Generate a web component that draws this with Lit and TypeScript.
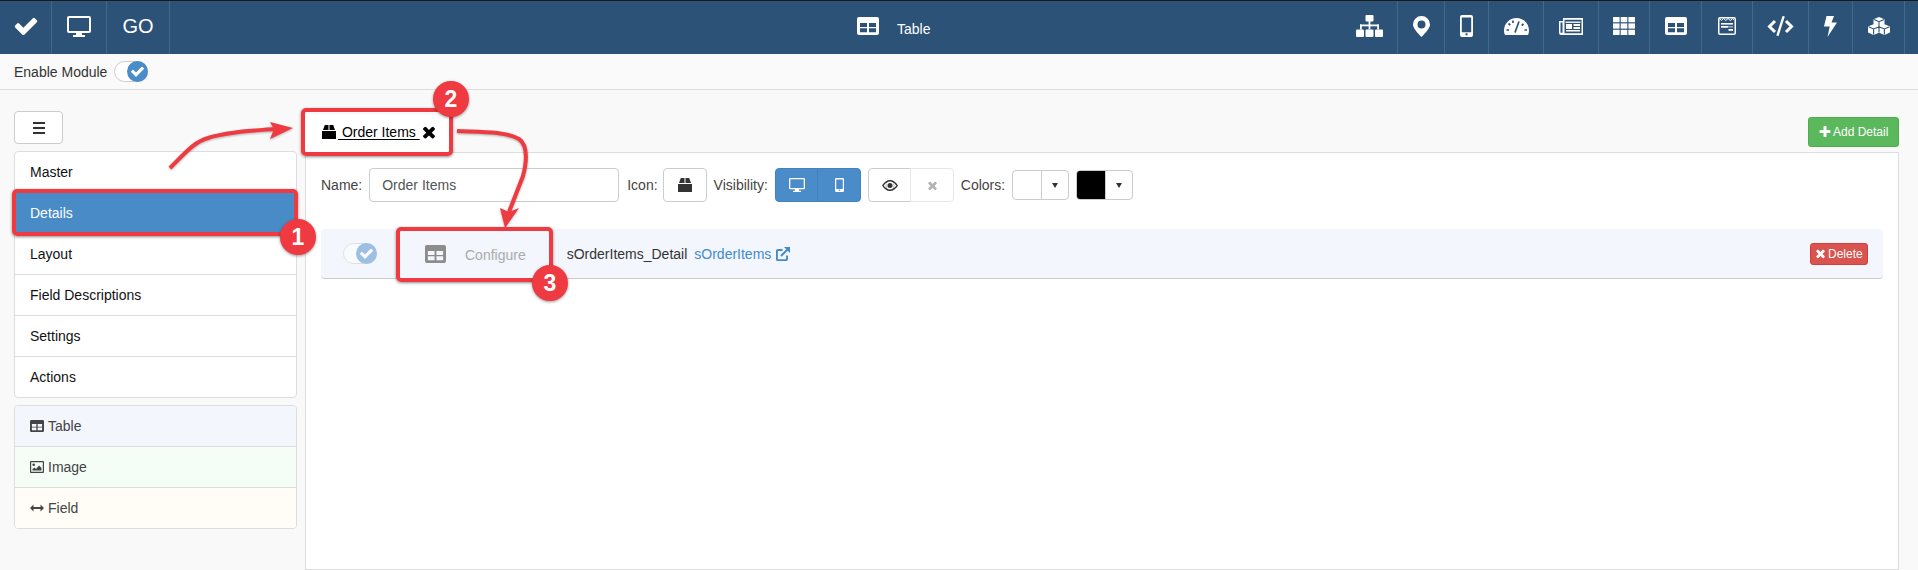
import { LitElement, html, css, svg } from "lit";
import { customElement } from "lit/decorators.js";

type Ic = { w: number; h: number; b: any };
const fa = (d: string) => svg`<path d=${d} />`;
const CHECK = "M1671 566q0 40-28 68l-724 724-136 136q-28 28-68 28t-68-28l-136-136-362-362q-28-28-28-68t28-68l136-136q28-28 68-28t68 28l294 295 656-657q28-28 68-28t68 28l136 136q28 28 28 68z";
const TIMES = "M1490 1322q0 40-28 68l-136 136q-28 28-68 28t-68-28l-294-294-294 294q-28 28-68 28t-68-28l-136-136q-28-28-28-68t28-68l294-294-294-294q-28-28-28-68t28-68l136-136q28-28 68-28t68 28l294 294 294-294q28-28 68-28t68 28l136 136q28 28 28 68t-28 68l-294 294 294 294q28 28 28 68z";
const PLUS = "M1600 736v192q0 40-28 68t-68 28h-416v416q0 40-28 68t-68 28h-192q-40 0-68-28t-28-68v-416h-416q-40 0-68-28t-28-68v-192q0-40 28-68t68-28h416v-416q0-40 28-68t68-28h192q40 0 68 28t28 68v416h416q40 0 68 28t28 68z";
const BAR = "#2c5278";

const icons: Record<string, Ic> = {
  check: { w: 1792, h: 1792, b: fa(CHECK) },
  times: { w: 1792, h: 1792, b: fa(TIMES) },
  plus: { w: 1792, h: 1792, b: fa(PLUS) },
  table: { w: 22, h: 18, b: svg`<path fill-rule="evenodd" d="M2 0h18a2 2 0 012 2v14a2 2 0 01-2 2H2a2 2 0 01-2-2V2a2 2 0 012-2zM3 6v4h7V6zM12 6v4h7V6zM3 11.3v4h7v-4zM12 11.3v4h7v-4z"/>` },
  desktop: { w: 24, h: 21, b: svg`<path fill-rule="evenodd" d="M2 0h20a2 2 0 012 2v13a2 2 0 01-2 2h-7v2h3v2H6v-2h3v-2H2a2 2 0 01-2-2V2a2 2 0 012-2zM2 2v13h20V2z"/>` },
  mobile: { w: 13, h: 22, b: svg`<path fill-rule="evenodd" d="M2 0h9a2 2 0 012 2v18a2 2 0 01-2 2H2a2 2 0 01-2-2V2a2 2 0 012-2zM1.8 2.5v14.7h9.4V2.5zM5.5 18.2v2h2v-2z"/>` },
  sitemap: { w: 27, h: 22, b: svg`<rect x="9.5" y="0" width="8" height="6.5" rx="1"/><rect x="12.6" y="6" width="1.8" height="4"/><rect x="4" y="9.5" width="19" height="1.8"/><rect x="4" y="9.5" width="1.8" height="5"/><rect x="21.2" y="9.5" width="1.8" height="5"/><rect x="12.6" y="9.5" width="1.8" height="5"/><rect x="0" y="14.5" width="8" height="7.5" rx="1"/><rect x="9.5" y="14.5" width="8" height="7.5" rx="1"/><rect x="19" y="14.5" width="8" height="7.5" rx="1"/>` },
  pin: { w: 17, h: 21, b: svg`<path fill-rule="evenodd" d="M8.5 0A8.5 8.5 0 0117 8.5c0 3.5-4.5 8.5-8.5 12.5C4.5 17 0 12 0 8.5A8.5 8.5 0 018.5 0zM8.5 4.5a4 4 0 100 8 4 4 0 000-8z"/>` },
  gauge: { w: 25, h: 17, b: svg`<path d="M12.5 0C19.5 0 25 5.5 25 12.5c0 1.7-.3 3.2-1 4.5H1c-.7-1.3-1-2.8-1-4.5C0 5.5 5.5 0 12.5 0z"/><g stroke=${BAR} stroke-width="1.7" fill="none"><path d="M11 14.5L15 3.5"/><path d="M9 2.5v2.5M4.5 5.5l1.8 1.6M2.5 12h2.5M20.5 12h2.5M19.5 6l-1.8 1.5"/></g>` },
  news: { w: 24, h: 17, b: svg`<path fill-rule="evenodd" d="M4 0h20v17H2.2A2.2 2.2 0 010 14.8V3h4zM1.5 4.5v10.3h2V4.5zM5.5 1.8v13.4h17V1.8z"/><rect x="6.5" y="3.5" width="15" height="1.5" opacity=".9"/><rect x="7" y="6" width="6" height="5"/><rect x="14.5" y="6" width="6.5" height="2"/><rect x="14.5" y="9" width="6.5" height="2"/><rect x="7" y="12" width="14" height="1.5"/>` },
  th: { w: 22, h: 18, b: svg`<rect width="6.6" height="5.2" rx=".5"/><rect x="7.7" width="6.6" height="5.2"/><rect x="15.4" width="6.6" height="5.2" rx=".5"/><rect y="6.4" width="6.6" height="5.2"/><rect x="7.7" y="6.4" width="6.6" height="5.2"/><rect x="15.4" y="6.4" width="6.6" height="5.2"/><rect y="12.8" width="6.6" height="5.2" rx=".5"/><rect x="7.7" y="12.8" width="6.6" height="5.2"/><rect x="15.4" y="12.8" width="6.6" height="5.2" rx=".5"/>` },
  calendar: { w: 18, h: 18, b: svg`<path fill-rule="evenodd" d="M2 0h14a2 2 0 012 2v14a2 2 0 01-2 2H2a2 2 0 01-2-2V2a2 2 0 012-2zM1.5 1.5v15h15v-15z"/><path d="M1.5 1.5l2 2 2-2 2.3 2 2.3-2 2.2 2 2.2-2 1.5 1.5" fill="none" stroke="currentColor" stroke-width="1"/><rect x="3" y="6" width="12" height="1.6"/><rect x="3" y="9" width="7" height="1.6"/><rect x="3" y="9" width="12" height="1.6" opacity=".5"/><rect x="10.5" y="12" width="4.5" height="1.8"/>` },
  code: { w: 27, h: 20, b: svg`<g fill="none" stroke="currentColor" stroke-width="3"><path d="M8 5L2.5 10.5 8 16"/><path d="M19 5l5.5 5.5L19 16"/></g><path d="M15.5 0L17.8 .6 11.6 20l-2.3-.6z"/>` },
  bolt: { w: 13, h: 21, b: svg`<path d="M2.5 0h7.5L7.5 6.5H13L3.5 21l2.2-10.5H0z"/>` },
  cubes: { w: 22, h: 18, b: svg`<path d="M11 0l5.5 2.2v5L22 9.5v6L16.5 18 11 15.8 5.5 18 0 15.5v-6l5.5-2.3v-5z"/><g fill="none" stroke=${BAR} stroke-width="1.1"><path d="M6 2.6l5 2.1 5-2.1M11 4.7v5"/><path d="M.6 9.8l5 2.1 5.4-2.1 5.4 2.1 5-2.1M5.6 11.9V17.5M16.4 11.9V17.5M11 9.7V15.6"/></g>` },
  box: { w: 14, h: 14, b: svg`<path d="M1 5L2.8 0h3.7v5zM13 5L11.2 0H7.5v5zM0 6h14v8H0z"/>` },
  eye: { w: 16, h: 11, b: svg`<path fill-rule="evenodd" d="M0 5.5C2 2 5 0 8 0s6 2 8 5.5C14 9 11 11 8 11S2 9 0 5.5zM8 1.6a3.9 3.9 0 100 7.8 3.9 3.9 0 000-7.8zM1.6 5.5C3 7.3 4 8 5 8.6a4.9 4.9 0 010-6.2C4 3 3 3.7 1.6 5.5zM14.4 5.5C13 3.7 12 3 11 2.4a4.9 4.9 0 010 6.2c1-.6 2-1.3 3.4-3.1z"/><circle cx="8" cy="5.5" r="2.5"/>` },
  image: { w: 14, h: 12, b: svg`<path fill-rule="evenodd" d="M1 0h12a1 1 0 011 1v10a1 1 0 01-1 1H1a1 1 0 01-1-1V1a1 1 0 011-1zM1.2 1.2v9.6h11.6V1.2z"/><circle cx="3.7" cy="3.7" r="1.3"/><path d="M2.5 9.5V8l2-1.5L6 8l3-3.5 2.5 2.5v2.5z"/>` },
  arrows: { w: 14, h: 8, b: svg`<path d="M0 4l3.5-3.5V3h7V.5L14 4l-3.5 3.5V5h-7v2.5z"/>` },
  external: { w: 14, h: 14, b: svg`<g fill="none" stroke="currentColor" stroke-width="1.9"><path d="M11 8.5V12a1.2 1.2 0 01-1.2 1.2H2A1.2 1.2 0 01.9 12V4.2A1.2 1.2 0 012 3h4.5"/><path d="M5 9L12.5 1.5"/></g><path d="M8 0h6v6z"/>` },
};

const ic = (name: string, w: number, h: number) => {
  const i = icons[name];
  return html`<svg class="ic" width=${w} height=${h} viewBox="0 0 ${i.w} ${i.h}" fill="currentColor" preserveAspectRatio="none">${i.b}</svg>`;
};

const rightIcons: [string, number, number, number][] = [
  ["sitemap", 27, 22, 56], ["pin", 17, 21, 47], ["mobile", 13, 22, 44], ["gauge", 25, 17, 55], ["news", 24, 17, 55],
  ["th", 22, 18, 51], ["table", 22, 18, 52], ["calendar", 18, 18, 51], ["code", 27, 20, 56], ["bolt", 13, 21, 44], ["cubes", 22, 18, 52],
];

@customElement("app-root")
export class AppRoot extends LitElement {
  static styles = css`
    :host { display: block; position: relative; width: 1918px; height: 570px; overflow: hidden; background: #f9f9f9; font-family: "Liberation Sans", Arial, sans-serif; font-size: 14px; color: #333; }
    .ic { display: block; flex: none; }
    .topbar { display: flex; height: 53px; border-top: 1px solid #1a1a1a; background: #2c5278; color: #fff; }
    .cell { display: flex; align-items: center; justify-content: center; box-sizing: border-box; padding-bottom: 3px; border-right: 1px solid #44678b; }
    .c1 { width: 52px; } .c2 { width: 55px; } .c3 { width: 63px; font-size: 20px; }
    .title { flex: 1; display: flex; align-items: center; gap: 18px; padding: 0 0 3px 687px; font-size: 14px; }
    .title span { margin-top: 6px; }
    .rcells { display: flex; margin-right: 13px; }
    .subbar { display: flex; align-items: center; gap: 7px; height: 35px; padding-left: 14px; background: #fafafa; border-bottom: 1px solid #ddd; }
    .toggle { position: relative; width: 34px; height: 21px; box-sizing: border-box; border: 1px solid #ccc; border-radius: 11px; background: #fff; }
    .knob { position: absolute; right: -1px; top: -1px; width: 21px; height: 21px; border-radius: 50%; background: #4a8cc9; color: #fff; display: flex; align-items: center; justify-content: center; }
    .toggle.dim { opacity: .5; }
    .layout { display: flex; height: 480px; }
    aside { width: 305px; box-sizing: border-box; padding: 21px 8px 0 14px; flex: none; }
    .burger { width: 49px; height: 33px; box-sizing: border-box; background: #fff; border: 1px solid #ccc; border-radius: 4px; display: flex; flex-direction: column; justify-content: center; align-items: center; gap: 3px; }
    .burger i { display: block; width: 12px; height: 2px; background: #333; }
    .list { margin-top: 7px; border: 1px solid #ddd; border-radius: 4px; background: #fff; overflow: hidden; }
    .item { display: flex; align-items: center; gap: 4px; height: 40px; padding-left: 15px; color: #111; border-bottom: 1px solid #ddd; }
    .item:last-child { border-bottom: 0; }
    .item.active { background: #488bc7; color: #fff; }
    .tool { color: #444; }
    .t-table { background: #f3f6fd; } .t-image { background: #f5fdf7; } .t-field { background: #fffdf5; }
    main { width: 1594px; flex: none; display: flex; flex-direction: column; }
    .head { height: 62px; display: flex; justify-content: space-between; align-items: flex-end; }
    .tab { display: flex; align-items: center; height: 38px; margin-bottom: -1px; padding: 0 14px 4px 17px; box-sizing: border-box; background: #fff; color: #000; z-index: 1; }
    .tab span { margin-left: 2px; text-decoration: underline; white-space: pre; text-underline-offset: 2px; }
    .add { display: flex; align-items: center; gap: 1px; height: 30px; box-sizing: border-box; width: 91px; padding-left: 9px; margin-bottom: 5px; background: #5cb85c; border: 1px solid #4cae4c; border-radius: 3px; color: #fff; font-size: 12px; }
    .panel { flex: 1; background: #fff; border: 1px solid #ddd; padding: 15px; }
    .form { display: flex; align-items: center; gap: 7px; height: 34px; color: #444; }
    .input { width: 250px; height: 34px; box-sizing: border-box; margin-right: 1px; border: 1px solid #ccc; border-radius: 4px; padding-left: 12px; display: flex; align-items: center; color: #555; }
    .icon-label { margin-right: -2px; }
    .btn { display: flex; align-items: center; justify-content: center; width: 44px; height: 34px; box-sizing: border-box; background: #fff; border: 1px solid #ccc; border-radius: 4px; color: #333; }
    .group { display: flex; }
    .group .btn { width: 43.5px; }
    .group .btn:first-child { border-radius: 4px 0 0 4px; }
    .group .btn:last-child { border-radius: 0 4px 4px 0; margin-left: -1px; }
    .btn.on { background: #4a8cc9; border-color: #4382bd; color: #fff; }
    .btn.off { border-color: #e6e6e6; color: #b4b4b4; }
    .color { display: flex; height: 30px; width: 57px; box-sizing: border-box; border: 1px solid #ccc; border-radius: 4px; overflow: hidden; background: #fff; }
    .swatch { width: 28px; border-right: 1px solid #ccc; flex: none; }
    .swatch.black { background: #000; }
    .caret { flex: 1; display: flex; align-items: center; justify-content: center; }
    .caret i { display: block; width: 0; height: 0; border-left: 3.5px solid transparent; border-right: 3.5px solid transparent; border-top: 5px solid #333; }
    .row { display: flex; align-items: center; height: 50px; box-sizing: border-box; margin-top: 27px; padding: 0 15px 0 22px; background: #f3f6fd; border-bottom: 1px solid #ccc; border-radius: 4px; color: #333; }
    .cfg { display: flex; align-items: center; gap: 19px; margin-left: 48px; color: #aaa; }
    .cfg .ic { color: #8c8c8c; }
    .cfg span { margin-top: 2px; }
    .name { margin-left: 41px; }
    .link { display: flex; align-items: center; gap: 5px; margin-left: 7px; color: #428bca; }
    .del { display: flex; align-items: center; gap: 1px; margin-left: auto; width: 58px; height: 22px; box-sizing: border-box; padding-left: 3px; background: #d9534f; border: 1px solid #d43f3a; border-radius: 3px; color: #fff; font-size: 12px; }
    .frame { position: absolute; box-sizing: border-box; border: 4px solid #ee3a40; border-radius: 5px; box-shadow: 0 1px 3px rgba(0,0,0,.45); z-index: 2; }
    .f1 { left: 12px; top: 189px; width: 286px; height: 47px; }
    .f2 { left: 301px; top: 108px; width: 152px; height: 48px; }
    .f3 { left: 396px; top: 227px; width: 157px; height: 55px; }
    .badge { position: absolute; width: 36px; height: 36px; border-radius: 50%; background: #ee3a40; color: #fff; font-size: 23px; font-weight: bold; display: flex; align-items: center; justify-content: center; box-shadow: 0 1px 3px rgba(0,0,0,.4); z-index: 3; }
    .b1 { left: 280px; top: 219px; } .b2 { left: 433px; top: 81px; } .b3 { left: 532px; top: 265px; }
    .arrows { position: absolute; left: 0; top: 0; z-index: 2; pointer-events: none; filter: drop-shadow(0 1px 1px rgba(0,0,0,.3)); }
  `;

  render() {
    return html`
      <div class="topbar">
        <div class="cell c1">${ic("check", 26, 26)}</div>
        <div class="cell c2">${ic("desktop", 24, 21)}</div>
        <div class="cell c3">GO</div>
        <div class="title">${ic("table", 22, 18)}<span>Table</span></div>
        <div class="rcells">
          ${rightIcons.map(([n, w, h, cw]) => html`<div class="cell" style="width:${cw}px">${ic(n, w, h)}</div>`)}
        </div>
      </div>
      <div class="subbar">
        <span>Enable Module</span>
        <div class="toggle"><div class="knob">${ic("check", 15, 15)}</div></div>
      </div>
      <div class="layout">
        <aside>
          <div class="burger"><i></i><i></i><i></i></div>
          <div class="list">
            <div class="item">Master</div>
            <div class="item active">Details</div>
            <div class="item">Layout</div>
            <div class="item">Field Descriptions</div>
            <div class="item">Settings</div>
            <div class="item">Actions</div>
          </div>
          <div class="list">
            <div class="item tool t-table">${ic("table", 14, 12)}<span>Table</span></div>
            <div class="item tool t-image">${ic("image", 14, 12)}<span>Image</span></div>
            <div class="item tool t-field">${ic("arrows", 14, 8)}<span>Field</span></div>
          </div>
        </aside>
        <main>
          <div class="head">
            <div class="tab">${ic("box", 14, 14)}<span> Order Items </span>${ic("times", 18, 18)}</div>
            <div class="add">${ic("plus", 14, 14)}<span>Add Detail</span></div>
          </div>
          <div class="panel">
            <div class="form">
              <span>Name:</span>
              <div class="input">Order Items</div>
              <span class="icon-label">Icon:</span>
              <div class="btn">${ic("box", 14, 14)}</div>
              <span>Visibility:</span>
              <div class="group">
                <div class="btn on">${ic("desktop", 16, 14)}</div>
                <div class="btn on">${ic("mobile", 9, 14)}</div>
              </div>
              <div class="group">
                <div class="btn">${ic("eye", 16, 11)}</div>
                <div class="btn off">${ic("times", 13, 13)}</div>
              </div>
              <span>Colors:</span>
              <div class="color"><div class="swatch"></div><div class="caret"><i></i></div></div>
              <div class="color"><div class="swatch black"></div><div class="caret"><i></i></div></div>
            </div>
            <div class="row">
              <div class="toggle dim"><div class="knob">${ic("check", 15, 15)}</div></div>
              <div class="cfg">${ic("table", 21, 18)}<span>Configure</span></div>
              <span class="name">sOrderItems_Detail</span>
              <div class="link"><span>sOrderItems</span>${ic("external", 14, 14)}</div>
              <div class="del">${ic("times", 13, 13)}<span>Delete</span></div>
            </div>
          </div>
        </main>
      </div>
      <svg class="arrows" width="1918" height="570" viewBox="0 0 1918 570">
        <g fill="none" stroke="#ee3a40" stroke-width="4">
          <path d="M170 168C186 152 194 142 208 138C226 132 250 131 274 129"/>
          <path d="M457 131C480 132 505 131 519 139C529 146 526 165 523 176L509 212"/>
        </g>
        <path d="M293 128L270 122L274 129L270 139z" fill="#ee3a40"/>
        <path d="M505 228L500 208L509 212L519 208z" fill="#ee3a40"/>
      </svg>
      <div class="frame f1"></div>
      <div class="frame f2"></div>
      <div class="frame f3"></div>
      <div class="badge b1">1</div>
      <div class="badge b2">2</div>
      <div class="badge b3">3</div>
    `;
  }
}
